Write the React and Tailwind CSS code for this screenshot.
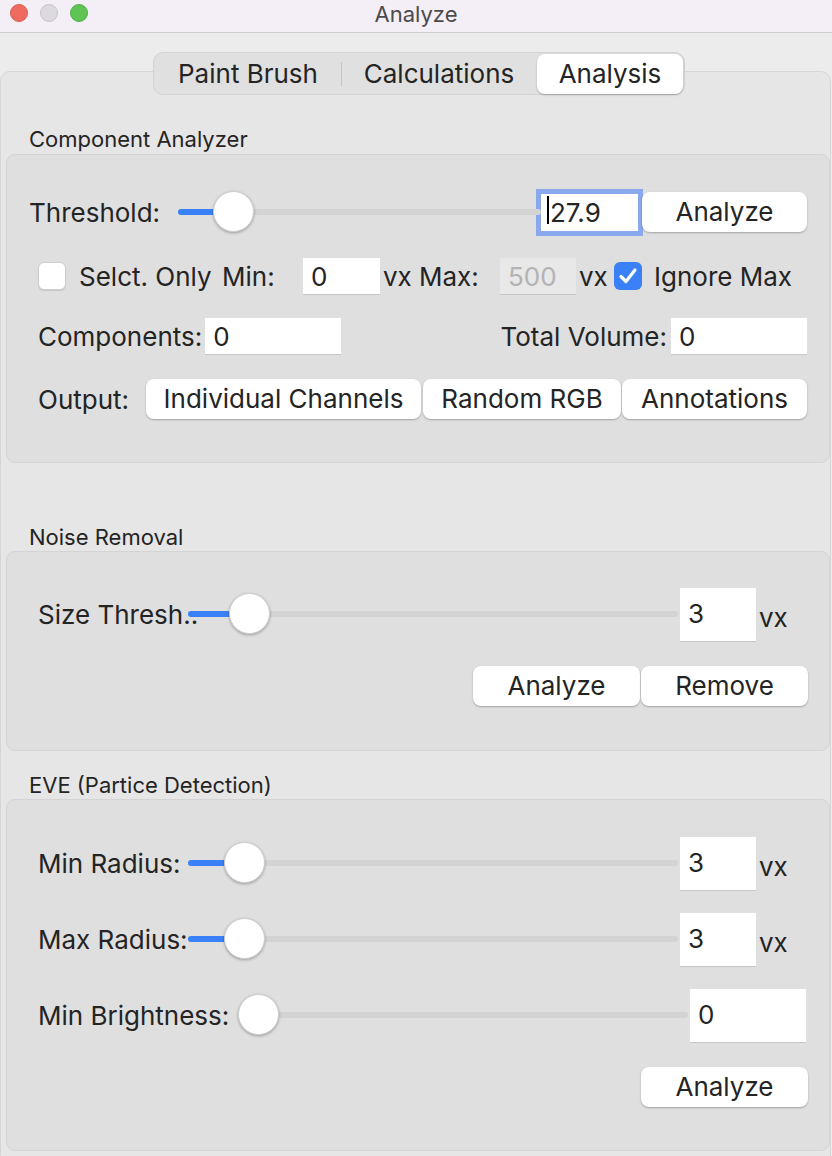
import { useState } from "react";

export default function App() {
  return (
    <div
      className="h-[1156px] w-[832px] overflow-hidden bg-[#ececec] text-[#242424]"
      style={{ fontFamily: "Inter, 'Noto Sans', sans-serif" }}
    >
      <TitleBar />
      <Tabs />
      <div className="-mt-[24px] h-[1100px] w-[831px] rounded-[10px] border border-[#d6d6d6] bg-[#e6e6e6]">
        <SectionLabel text="Component Analyzer" mt="mt-[55px]" />
        <ComponentAnalyzer />
        <SectionLabel text="Noise Removal" mt="mt-[62px]" />
        <NoiseRemoval />
        <SectionLabel text="EVE (Partice Detection)" mt="mt-[22px]" />
        <Eve />
      </div>
    </div>
  );
}

function TitleBar() {
  return (
    <div className="grid h-[33px] grid-cols-[1fr_auto_1fr] items-start border-b border-[#d1cdd3] bg-[#f4eff6] pt-[4px]">
      <div className="flex items-center gap-[12px] pl-[10px]">
        <span className="size-[18px] rounded-full border border-[#dd5a50] bg-[#ee6b60]" />
        <span className="size-[18px] rounded-full border border-[#c6c4c9] bg-[#dcdadf]" />
        <span className="size-[18px] rounded-full border border-[#4fae45] bg-[#60c454]" />
      </div>
      <div className="text-[22px] leading-[20px] text-[#4b4b4b]">Analyze</div>
      <div />
    </div>
  );
}

function Tabs() {
  const [tab, setTab] = useState("Analysis");
  const tabs = [
    { name: "Paint Brush", w: "w-[186px]" },
    { name: "Calculations", w: "w-[194px]" },
    { name: "Analysis", w: "w-[146px]" },
  ];
  return (
    <div className="relative z-10 flex justify-center pt-[19px] pl-[6px]">
      <div className="flex h-[43px] items-center rounded-[10px] border border-[#d2d2d2] bg-[#e0e0e0] p-[1px]">
        {tabs.map((t, i) => (
          <div key={t.name} className="flex items-center">
            {i == 1 && (
              <span
                className={
                  "h-[24px] w-px " +
                  (tab == "Paint Brush" || tab == "Calculations"
                    ? "bg-transparent"
                    : "bg-[#c4c4c4]")
                }
              />
            )}
            {i == 2 && <span className="h-[24px] w-px bg-transparent" />}
            <button
              onClick={() => setTab(t.name)}
              className={
                "h-[40px] text-[26px] leading-none " +
                t.w +
                (tab == t.name
                  ? " rounded-[8px] bg-white shadow-[0_1px_2px_rgba(0,0,0,0.25)]"
                  : "")
              }
            >
              {t.name}
            </button>
          </div>
        ))}
      </div>
    </div>
  );
}

function SectionLabel({ text, mt }) {
  return (
    <div className={mt + " h-[24px] pl-[28px] text-[22px] leading-[24px]"}>
      {text}
    </div>
  );
}

function Group({ h, mt, children }) {
  return (
    <div
      className={
        "ml-[5px] w-[824px] rounded-[9px] border border-[#d4d4d4] bg-[#dfdfdf] " +
        h +
        " " +
        mt
      }
    >
      {children}
    </div>
  );
}

function Slider({ w, thumb, fill = true }) {
  return (
    <div className={"relative h-[44px] shrink-0 " + w}>
      <div className="absolute top-[19px] right-0 left-0 h-[6px] rounded-full bg-[#d3d3d3]" />
      {fill && (
        <div
          className="absolute top-[19px] left-0 h-[6px] rounded-full bg-[#3a80f6]"
          style={{ width: thumb }}
        />
      )}
      <div
        className="absolute top-[1px] size-[41px] rounded-full border border-[#cfcfcf] bg-white shadow-[0_1px_3px_rgba(0,0,0,0.3)]"
        style={{ left: thumb - 20 }}
      />
    </div>
  );
}

function Field({ value, w, h = "h-[36px]", top = false, disabled = false }) {
  return (
    <div
      className={
        "flex shrink-0 pl-[8px] text-[26px] leading-none shadow-[0_1px_0_#c6c6c6] " +
        w +
        " " +
        h +
        (top ? " items-start pt-[13px]" : " items-end pb-[4px]") +
        (disabled ? " bg-[#e8e8e8] text-[#b3b3b3]" : " bg-white")
      }
    >
      {value}
    </div>
  );
}

function Button({ label, w }) {
  return (
    <button
      className={
        "h-[40px] shrink-0 rounded-[8px] bg-white text-[26px] leading-none shadow-[0_1px_2px_rgba(0,0,0,0.28)] " +
        w
      }
    >
      {label}
    </button>
  );
}

function Checkbox({ checked }) {
  const [on, setOn] = useState(checked);
  return (
    <button
      onClick={() => setOn(!on)}
      className={
        "flex size-[28px] shrink-0 items-center justify-center rounded-[6px] " +
        (on
          ? "bg-[#3a80f6]"
          : "border border-[#cdcdcd] bg-white shadow-[0_1px_1px_rgba(0,0,0,0.12)]")
      }
    >
      {on && (
        <svg width="24" height="24" viewBox="0 0 24 24" fill="none">
          <polyline
            points="5,12.5 10,17.5 19,6"
            stroke="white"
            strokeWidth="3.2"
            strokeLinecap="round"
            strokeLinejoin="round"
          />
        </svg>
      )}
    </button>
  );
}

function ComponentAnalyzer() {
  return (
    <Group h="h-[309px]" mt="mt-[3px]">
      <div className="mt-[33px] flex h-[48px] items-center pl-[22px] text-[26px]">
        <span className="w-[149px] shrink-0">Threshold:</span>
        <Slider w="w-[363px]" thumb={55} />
        <div className="flex h-[37px] w-[97px] shrink-0 items-end bg-white pb-[5px] pl-[6px] text-[26px] leading-none shadow-[0_0_0_5px_#8aa8ec]">
          <span className="mr-[1px] h-[28px] w-[2px] self-center bg-black" />
          27.9
        </div>
        <div className="ml-[4px]">
          <Button label="Analyze" w="w-[165px]" />
        </div>
      </div>

      <div className="mt-[16px] flex h-[48px] items-center pl-[31px] text-[26px]">
        <Checkbox checked={false} />
        <span className="ml-[13px] w-[143px] shrink-0">Selct. Only</span>
        <span className="w-[81px] shrink-0">Min:</span>
        <Field value="0" w="w-[77px]" />
        <span className="ml-[3px] w-[36px] shrink-0">vx</span>
        <span className="w-[81px] shrink-0">Max:</span>
        <Field value="500" w="w-[76px]" disabled />
        <span className="ml-[3px] w-[35px] shrink-0">vx</span>
        <Checkbox checked={true} />
        <span className="ml-[12px]">Ignore Max</span>
      </div>

      <div className="mt-[12px] flex h-[48px] items-center justify-between pr-[22px] pl-[31px] text-[26px]">
        <div className="flex items-center">
          <span>Components:</span>
          <div className="ml-[3px]">
            <Field value="0" w="w-[136px]" />
          </div>
        </div>
        <div className="flex items-center">
          <span>Total Volume:</span>
          <div className="ml-[4px]">
            <Field value="0" w="w-[136px]" />
          </div>
        </div>
      </div>

      <div className="mt-[15px] flex h-[48px] items-center pl-[31px] text-[26px]">
        <span className="w-[108px] shrink-0">Output:</span>
        <Button label="Individual Channels" w="w-[275px]" />
        <div className="ml-[2px]">
          <Button label="Random RGB" w="w-[198px]" />
        </div>
        <div className="ml-[1px]">
          <Button label="Annotations" w="w-[185px]" />
        </div>
      </div>
    </Group>
  );
}

function SliderRow({ label, labelW, sliderW, thumb, fill, fieldW, value, unit, mt }) {
  return (
    <div className={"flex h-[54px] items-center pl-[31px] text-[26px] " + mt}>
      <span className={"shrink-0 whitespace-nowrap " + labelW}>{label}</span>
      <Slider w={sliderW} thumb={thumb} fill={fill} />
      <div className="ml-[2px]">
        <Field value={value} w={fieldW} h="h-[53px]" top />
      </div>
      {unit && <span className="ml-[3px] pt-[6px]">{unit}</span>}
    </div>
  );
}

function NoiseRemoval() {
  return (
    <Group h="h-[200px]" mt="mt-[2px]">
      <SliderRow
        mt="mt-[35px]"
        label="Size Thresh.."
        labelW="w-[150px]"
        sliderW="w-[490px]"
        thumb={61}
        fieldW="w-[76px]"
        value="3"
        unit="vx"
      />
      <div className="mt-[25px] flex justify-end gap-[1px] pr-[21px]">
        <Button label="Analyze" w="w-[167px]" />
        <Button label="Remove" w="w-[167px]" />
      </div>
    </Group>
  );
}

function Eve() {
  return (
    <Group h="h-[352px]" mt="mt-[2px]">
      <SliderRow
        mt="mt-[36px]"
        label="Min Radius:"
        labelW="w-[150px]"
        sliderW="w-[490px]"
        thumb={56}
        fieldW="w-[76px]"
        value="3"
        unit="vx"
      />
      <SliderRow
        mt="mt-[22px]"
        label="Max Radius:"
        labelW="w-[150px]"
        sliderW="w-[490px]"
        thumb={56}
        fieldW="w-[76px]"
        value="3"
        unit="vx"
      />
      <SliderRow
        mt="mt-[22px]"
        label="Min Brightness:"
        labelW="w-[200px]"
        sliderW="w-[450px]"
        thumb={20}
        fill={false}
        fieldW="w-[116px]"
        value="0"
      />
      <div className="mt-[25px] flex justify-end pr-[21px]">
        <Button label="Analyze" w="w-[167px]" />
      </div>
    </Group>
  );
}
